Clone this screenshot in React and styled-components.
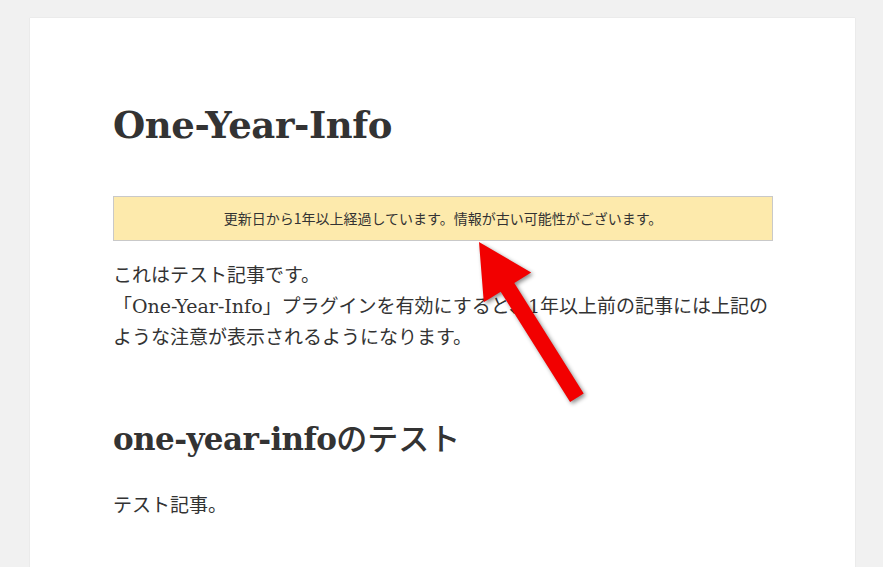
import React from 'react';
import styled, { createGlobalStyle } from 'styled-components';

const GlobalStyle = createGlobalStyle`
  html, body {
    margin: 0;
    padding: 0;
    background-color: #f1f1f1;
    overflow: hidden;
  }
`;

const Page = styled.div`
  position: relative;
  width: 883px;
  height: 567px;
  overflow: hidden;
`;

const Card = styled.article`
  margin: 18px 0 0 30px;
  width: 825px;
  min-height: 620px;
  box-sizing: border-box;
  padding: 85px 82px 0 83px;
  background-color: #fff;
  box-shadow: 0 0 1px rgba(0, 0, 0, 0.15);
  color: #333;
  font-family: "DejaVu Serif", "Liberation Serif", "Noto Sans CJK JP", serif;
`;

const Title = styled.h1`
  margin: 0 0 49px;
  font-size: 37px;
  line-height: 1.2;
  font-weight: 700;
  letter-spacing: -0.4px;
`;

const Notice = styled.div`
  background-color: #fdeaac;
  border: 1px solid #c9c9c9;
  padding: 12px 10px;
  text-align: center;
  font-size: 14px;
  line-height: 19px;
  font-family: "Noto Sans CJK JP", sans-serif;
  color: #333;
`;

const Body = styled.div`
  margin-top: ${(p) => (p.$first ? '19px' : '0')};
  font-family: "DejaVu Serif", "Noto Sans CJK JP", serif;
  font-size: 19px;
  line-height: 31px;
`;

const Para = styled.p`
  margin: 0;
`;

const SubTitle = styled.h2`
  margin: 66px 0 30px;
  font-size: 31px;
  line-height: 1.3;
  font-weight: 700;
  letter-spacing: -0.6px;
  font-family: "DejaVu Serif", "Noto Sans CJK JP", serif;
`;

const Kana = styled.span`
  font-weight: 500;
  letter-spacing: 0;
  font-size: 31px;
`;

const Arrow = styled.svg`
  position: absolute;
  left: 0;
  top: 0;
  pointer-events: none;
  filter: drop-shadow(2px 2px 2px rgba(0, 0, 0, 0.45));
`;

export default function App() {
  return (
    <Page>
      <GlobalStyle />
      <Card>
        <Title>One-Year-Info</Title>
        <Notice>更新日から1年以上経過しています。情報が古い可能性がございます。</Notice>
        <Body $first>
          <Para>
            これはテスト記事です。
            <br />
            「One-Year-Info」プラグインを有効にすると、1年以上前の記事には上記のような注意が表示されるようになります。
          </Para>
        </Body>
        <SubTitle>
          one-year-info<Kana>のテスト</Kana>
        </SubTitle>
        <Body>
          <Para>テスト記事。</Para>
        </Body>
      </Card>
      <Arrow width="883" height="567" viewBox="0 0 883 567">
        <polygon
          fill="#f20000"
          points="479,242 531.2,272.5 514.3,283.1 583.7,393.5 570.1,402.1 500.7,291.7 483.8,302.3"
        />
      </Arrow>
    </Page>
  );
}
